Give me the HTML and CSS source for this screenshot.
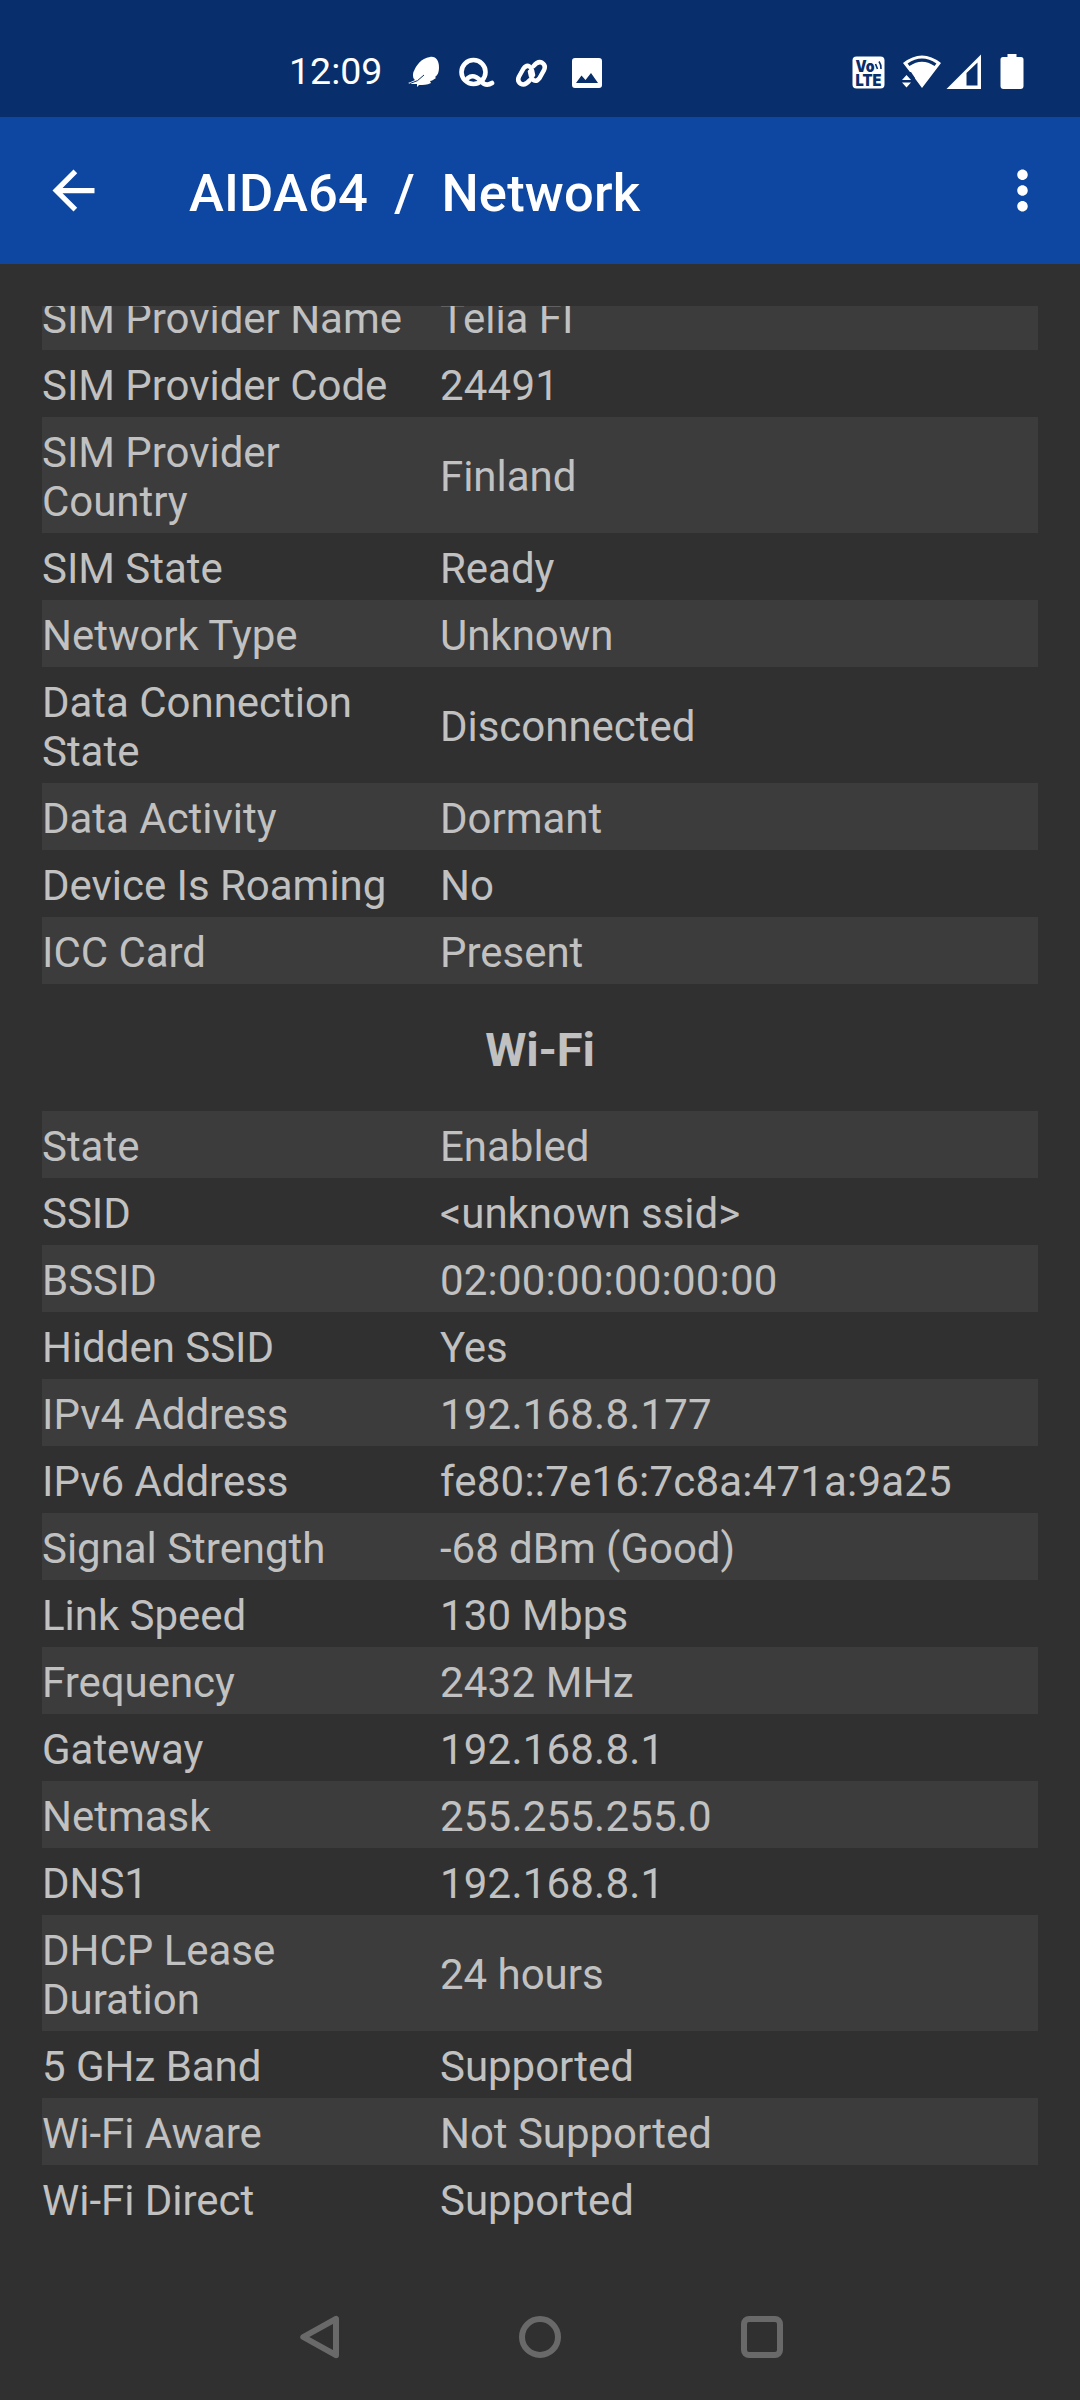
FILE: index.html
```html
<!DOCTYPE html>
<html lang="en">
<head>
<meta charset="utf-8">
<title>AIDA64 / Network</title>
<link rel="stylesheet" href="styles.css">
</head>
<body>
<div class="screen">
  <header class="status">
    <div class="status-left">
      <span class="clock">12:09</span>
      <svg class="ic-feather" width="32" height="32" viewBox="0 0 32 32"><path fill="#fff" d="M0 27C3 26 5 25 7 24C4 22 5 16 6 15C8 10 13 2 22 1C28 0 31 5 31 11C31 16 30 19 27 21L28 22C25 24 24 25 22 25L23 27C19 29 15 29 11 29L9 31L9 28L3 28Z"/><path d="M2 27.500Q10 26 16 19" fill="none" stroke="#082e6b" stroke-width="1"/></svg>
      <svg class="ic-q" width="38" height="32" viewBox="0 0 38 32"><circle cx="15.500" cy="15" r="12" fill="none" stroke="#fff" stroke-width="4.600"/><path d="M10 21C15 17 19 20 23 24C27 29 31 28 34 26" fill="none" stroke="#fff" stroke-width="4.600" stroke-linecap="round"/></svg>
      <svg class="ic-link" width="34" height="32" viewBox="0 0 34 32"><g fill="none" stroke="#fff" stroke-width="4.500" stroke-linecap="round" stroke-linejoin="round"><path d="M14.500 23.500Q10 29 5.800 26.800Q1.800 24.300 4 19.500L8.500 11.500Q11.500 7.500 14.500 9.500Q16.500 11 17 13.500L18 18"/><path d="M18.500 9.100Q23 3.600 27.200 5.800Q31.200 8.300 29 13.100L24.500 21.100Q21.500 25.100 18.500 23.100Q16.500 21.600 16 19.100L15 14.600"/></g></svg>
      <svg class="ic-image" width="30" height="30" viewBox="0 0 30 30"><path fill="#fff" fill-rule="evenodd" d="M3 0H27Q30 0 30 3V27Q30 30 27 30H3Q0 30 0 27V3Q0 0 3 0ZM4 25H26L19 15L13.500 22L9.500 17.500Z"/></svg>
    </div>
    <div class="status-right">
      <svg class="ic-volte" width="33" height="33" viewBox="0 0 33 33"><rect x=".5" y=".5" width="32" height="32" rx="4" fill="#fff"/><g class="volte-text"><text x="3.500" y="15.500" textLength="19" lengthAdjust="spacingAndGlyphs">Vo</text><text x="3.500" y="29.500" textLength="26" lengthAdjust="spacingAndGlyphs">LTE</text></g><path d="M23.500 8L25.500 13M27 5.500Q29.500 9 29 13" fill="none" stroke="#082e6b" stroke-width="1.600"/></svg>
      <svg class="ic-wifi" width="40" height="34" viewBox="0 0 40 34"><path fill="#fff" d="M1 8Q20 -7 39 8L20 33L13 23.500L9.500 19Z"/><path d="M6.500 9.800Q20 .5 33.500 9.800" fill="none" stroke="#082e6b" stroke-width="3.200"/><path d="M-1 17H9L13 23V34H-1Z" fill="#082e6b"/><path fill="#fff" d="M0 25L4.500 20L9 25ZM0 27.500H9L4.500 32.500Z"/></svg>
      <svg class="ic-signal" width="36" height="36" viewBox="0 0 36 36"><path fill="#fff" fill-rule="evenodd" d="M35 .5V35H.5ZM31.500 8.500V31.500H20.500V19Z"/></svg>
      <svg class="ic-battery" width="24" height="36" viewBox="0 0 24 36"><path fill="#fff" d="M7.500 0H16.500V3H21Q23.500 3 23.500 5.500V32Q23.500 35 20.500 35H3.500Q.5 35 .5 32V5.500Q.5 3 3 3H7.500Z"/></svg>
    </div>
  </header>
  <div class="appbar">
    <svg class="back" width="63" height="63" viewBox="0 0 24 24"><path fill="#fff" d="M20 11H7.830l5.590-5.590L12 4l-8 8 8 8 1.410-1.410L7.830 13H20v-2z"/></svg>
    <h1 class="title">AIDA64&nbsp; /&nbsp; Network</h1>
    <svg class="more" width="63" height="63" viewBox="0 0 24 24"><path fill="#fff" d="M12 8c1.100 0 2-.9 2-2s-.9-2-2-2-2 .9-2 2 .9 2 2 2zm0 2c-1.100 0-2 .9-2 2s.9 2 2 2 2-.9 2-2-.9-2-2-2zm0 6c-1.100 0-2 .9-2 2s.9 2 2 2 2-.9 2-2-.9-2-2-2z"/></svg>
  </div>
  <main class="list">
    <div class="group group-sim">
      <div class="row"><span>SIM Provider Name</span><span>Telia FI</span></div>
      <div class="row"><span>SIM Provider Code</span><span class="num">24491</span></div>
      <div class="row"><span>SIM Provider<br>Country</span><span class="mid">Finland</span></div>
      <div class="row"><span>SIM State</span><span>Ready</span></div>
      <div class="row"><span>Network Type</span><span>Unknown</span></div>
      <div class="row"><span>Data Connection<br>State</span><span class="mid">Disconnected</span></div>
      <div class="row"><span>Data Activity</span><span>Dormant</span></div>
      <div class="row"><span>Device Is Roaming</span><span>No</span></div>
      <div class="row"><span>ICC Card</span><span>Present</span></div>
    </div>
    <h2 class="heading">Wi-Fi</h2>
    <div class="group">
      <div class="row"><span>State</span><span>Enabled</span></div>
      <div class="row"><span>SSID</span><span>&lt;unknown ssid&gt;</span></div>
      <div class="row"><span>BSSID</span><span class="num">02:00:00:00:00:00</span></div>
      <div class="row"><span>Hidden SSID</span><span>Yes</span></div>
      <div class="row"><span>IPv4 Address</span><span class="num">192.168.8.177</span></div>
      <div class="row"><span>IPv6 Address</span><span class="num">fe80::7e16:7c8a:471a:9a25</span></div>
      <div class="row"><span>Signal Strength</span><span>-68 dBm (Good)</span></div>
      <div class="row"><span>Link Speed</span><span class="num">130 Mbps</span></div>
      <div class="row"><span>Frequency</span><span class="num">2432 MHz</span></div>
      <div class="row"><span>Gateway</span><span class="num">192.168.8.1</span></div>
      <div class="row"><span>Netmask</span><span class="num">255.255.255.0</span></div>
      <div class="row"><span>DNS1</span><span class="num">192.168.8.1</span></div>
      <div class="row"><span>DHCP Lease<br>Duration</span><span class="mid">24 hours</span></div>
      <div class="row"><span>5 GHz Band</span><span>Supported</span></div>
      <div class="row"><span>Wi-Fi Aware</span><span>Not Supported</span></div>
      <div class="row"><span>Wi-Fi Direct</span><span>Supported</span></div>
    </div>
  </main>
  <nav class="navbar">
    <svg width="44" height="44" viewBox="0 0 44 44"><path d="M38 3.800V40.200L5.300 22Z"/></svg>
    <svg width="44" height="44" viewBox="0 0 44 44"><circle cx="21" cy="22" r="18"/></svg>
    <svg width="44" height="44" viewBox="0 0 44 44"><rect x="4" y="4" width="36" height="36" rx="5"/></svg>
  </nav>
</div>
</body>
</html>
```
FILE: styles.css
```css
* { box-sizing: border-box; }
body {
  margin: 0;
  background: #303030;
  color: #c1c1c1;
  font-family: Roboto, sans-serif;
}
svg { display: block; flex: none; }
.screen {
  display: flex;
  flex-direction: column;
  width: 1080px;
  height: 2400px;
  overflow: hidden;
}
.status {
  display: flex;
  justify-content: space-between;
  height: 117px;
  padding: 54px 56px 0 289px;
  background: #082e6b;
  color: #fff;
}
.status-left, .status-right { display: flex; align-items: flex-start; }
.clock { width: 119px; margin-top: -1px; font-size: 37.500px; line-height: 36px; white-space: nowrap; }
.ic-feather { margin-top: 2px; }
.ic-q { margin: 3px 0 0 18px; }
.ic-link { margin: 3px 0 0 19px; }
.ic-image { margin: 4px 0 0 23px; }
.ic-volte { margin: 2px -1px 0 0; }
.ic-wifi { margin: 1px 0 0 18px; }
.ic-signal { margin: 0 0 0 4px; }
.ic-battery { margin-left: 18px; }
.volte-text { font-family: Inter, sans-serif; font-weight: 900; font-size: 15.500px; fill: #082e6b; }
.appbar {
  display: flex;
  align-items: center;
  height: 147px;
  padding: 0 26px 0 42px;
  background: #0d47a1;
  color: #fff;
}
.title { flex: 1; margin: 4px 0 0 84px; font-size: 52.500px; font-weight: 500; line-height: 62px; letter-spacing: .17px; white-space: nowrap; }
.list { flex: 1; margin: 42px 42px 0; overflow: hidden; }
.group-sim { margin-top: -23px; }
.row {
  display: grid;
  grid-template-columns: 398px 1fr;
  align-items: center;
  padding: 11px 0 7px;
  font-size: 42px;
  line-height: 49px;
  letter-spacing: -.03px;
}
.row:nth-child(odd) { background: #3c3c3c; }
.num { letter-spacing: .2px; }
.mid { padding-bottom: 2px; }
.heading { margin: 0; padding: 38px 0 33px; font-size: 47px; font-weight: 700; line-height: 56px; letter-spacing: -.2px; text-align: center; }
.navbar { display: flex; justify-content: space-between; height: 126px; margin-top: auto; padding: 41px 296px 0 298px; }
.navbar svg { fill: none; stroke: #696969; stroke-width: 6; stroke-linejoin: round; }
.more { margin-right: .5px; }
```
